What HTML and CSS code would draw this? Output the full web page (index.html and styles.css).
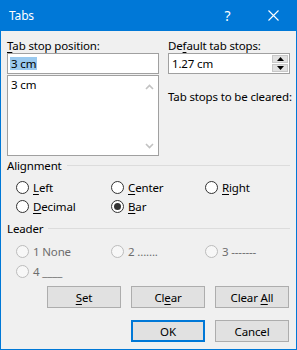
FILE: index.html
```html
<!DOCTYPE html>
<html lang="en">
<head>
    <meta charset="UTF-8">
    <title>Tabs</title>
    <link rel="stylesheet" href="styles.css">
</head>
<body>
    <div class="window">
        <div class="titlebar">
            <span class="title">Tabs</span>
            <span class="help">?</span>
            <span class="close">
                <svg width="11" height="11" viewBox="0 0 11 11"><path d="M0.5 0.5L10.5 10.5M10.5 0.5L0.5 10.5" stroke="#fff" stroke-width="1.1" fill="none"/></svg>
            </span>
        </div>

        <div class="content">
            <div class="top">
                <div class="col-left">
                    <div class="label"><u>T</u>ab stop position:</div>
                    <div class="textbox"><span class="selected">3 cm</span></div>
                    <div class="listbox">
                        <div class="list-items">
                            <div class="list-item">3 cm</div>
                        </div>
                        <div class="scrollbar">
                            <svg width="9" height="6" viewBox="0 0 9 6"><path d="M1 5L4.5 1.5L8 5" stroke="#c2c2c2" stroke-width="1.6" fill="none"/></svg>
                            <svg width="9" height="6" viewBox="0 0 9 6"><path d="M1 1L4.5 4.5L8 1" stroke="#c2c2c2" stroke-width="1.6" fill="none"/></svg>
                        </div>
                    </div>
                </div>
                <div class="col-right">
                    <div class="label">De<u>f</u>ault tab stops:</div>
                    <div class="spinbox">
                        <span class="spin-value">1.27 cm</span>
                        <div class="spin-buttons">
                            <div class="spin-btn"><svg width="7" height="4" viewBox="0 0 7 4"><path d="M0 4L3.5 0L7 4Z" fill="#000"/></svg></div>
                            <div class="spin-btn"><svg width="7" height="4" viewBox="0 0 7 4"><path d="M0 0L3.5 4L7 0Z" fill="#000"/></svg></div>
                        </div>
                    </div>
                    <div class="label cleared">Tab stops to be cleared:</div>
                </div>
            </div>

            <div class="group-head alignment-head"><span>Alignment</span></div>
            <div class="radios">
                <div class="radio"><span class="circle"></span><span><u>L</u>eft</span></div>
                <div class="radio"><span class="circle"></span><span><u>C</u>enter</span></div>
                <div class="radio"><span class="circle"></span><span><u>R</u>ight</span></div>
                <div class="radio"><span class="circle"></span><span><u>D</u>ecimal</span></div>
                <div class="radio"><span class="circle checked"></span><span><u>B</u>ar</span></div>
            </div>

            <div class="group-head leader-head"><span>Leader</span></div>
            <div class="radios leader">
                <div class="radio disabled"><span class="circle"></span><span>1 None</span></div>
                <div class="radio disabled"><span class="circle"></span><span>2 .......</span></div>
                <div class="radio disabled"><span class="circle"></span><span>3 -------</span></div>
                <div class="radio disabled"><span class="circle"></span><span>4 ____</span></div>
            </div>

            <div class="buttons">
                <button class="btn"><u>S</u>et</button>
                <button class="btn">Cl<u>e</u>ar</button>
                <button class="btn">Clear <u>A</u>ll</button>
            </div>
            <div class="buttons last">
                <button class="btn default">OK</button>
                <button class="btn">Cancel</button>
            </div>
        </div>
    </div>
</body>
</html>
```

FILE: styles.css
```css
body {
    margin: 0;
    font-family: "Noto Sans", sans-serif;
    font-size: 11.5px;
    letter-spacing: -0.15px;
    color: #000;
}
u {
    text-underline-offset: 2px;
}
.window {
    width: 297px;
    height: 350px;
    box-sizing: border-box;
    border: 1px solid #0078d7;
    border-top: none;
    background: #f0f0f0;
    display: flex;
    flex-direction: column;
}
.titlebar {
    height: 31px;
    background: #0078d7;
    color: #fff;
    display: flex;
    align-items: center;
    font-size: 12px;
}
.title {
    padding-left: 8px;
    flex: 1;
}
.help {
    font-size: 14px;
    width: 45px;
    text-align: center;
    margin-right: 1px;
}
.close {
    width: 45px;
    height: 31px;
    display: flex;
    align-items: center;
    justify-content: center;
}
.content {
    padding: 7px 6px 0 6px;
    flex: 1;
}
.top {
    display: flex;
    gap: 9px;
}
.col-left {
    width: 152px;
}
.col-right {
    width: 122px;
}
.label {
    height: 15px;
    line-height: 15px;
    white-space: nowrap;
}
.textbox,
.spinbox {
    height: 21px;
    box-sizing: border-box;
    border: 1px solid #a0a0a0;
    background: #fff;
    display: flex;
    align-items: center;
}
.textbox {
    padding-left: 2px;
}
.selected {
    background: #99c9ef;
    padding: 0 1px;
    line-height: 13px;
}
.listbox {
    margin-top: 1px;
    height: 81px;
    box-sizing: border-box;
    border: 1px solid #a0a0a0;
    background: #fff;
    display: flex;
}
.list-items {
    flex: 1;
    padding: 1px 3px;
}
.list-item {
    line-height: 15px;
}
.scrollbar {
    width: 17px;
    display: flex;
    flex-direction: column;
    justify-content: space-between;
    align-items: center;
    padding: 8px 0 6px;
}
.spinbox {
    padding-left: 3px;
    justify-content: space-between;
}
.spin-buttons {
    width: 16px;
    height: 17px;
    margin-right: 1px;
    display: flex;
    flex-direction: column;
    gap: 1px;
}
.spin-btn {
    flex: 1;
    background: #e1e1e1;
    border: 1px solid #c8c8c8;
    display: flex;
    align-items: center;
    justify-content: center;
}
.cleared {
    margin-top: 15px;
}
.group-head {
    display: flex;
    align-items: center;
    height: 15px;
    line-height: 15px;
}
.group-head::after {
    content: "";
    flex: 1;
    border-top: 1px solid #dcdcdc;
    margin-left: 5px;
}
.alignment-head {
    margin-top: 2px;
}
.leader-head {
    margin-top: 5px;
}
.radios {
    display: grid;
    grid-template-columns: 95px 94px auto;
    grid-auto-rows: 19px;
    padding: 5px 0 0 9px;
}
.radios.leader {
    grid-auto-rows: 20px;
}
.radio {
    display: flex;
    align-items: center;
    gap: 4px;
}
.circle {
    width: 13px;
    height: 13px;
    box-sizing: border-box;
    border: 1px solid #333;
    border-radius: 50%;
    background: #fff;
    display: flex;
    align-items: center;
    justify-content: center;
}
.circle.checked::after {
    content: "";
    width: 7px;
    height: 7px;
    border-radius: 50%;
    background: #333;
}
.radio.disabled {
    color: #6d6d6d;
}
.radio.disabled .circle {
    border-color: #bcbcbc;
    background: #f7f7f7;
}
.buttons {
    display: flex;
    justify-content: flex-end;
    gap: 10px;
    padding-right: 1px;
    margin-top: 5px;
}
.buttons.last {
    margin-top: 12px;
}
.btn {
    width: 74px;
    height: 22px;
    box-sizing: border-box;
    background: #e1e1e1;
    border: 1px solid #adadad;
    font-family: "Noto Sans", sans-serif;
    font-size: 11.5px;
    letter-spacing: -0.15px;
    color: #000;
    padding: 0;
}
.btn.default {
    border: 2px solid #0078d7;
}
```
